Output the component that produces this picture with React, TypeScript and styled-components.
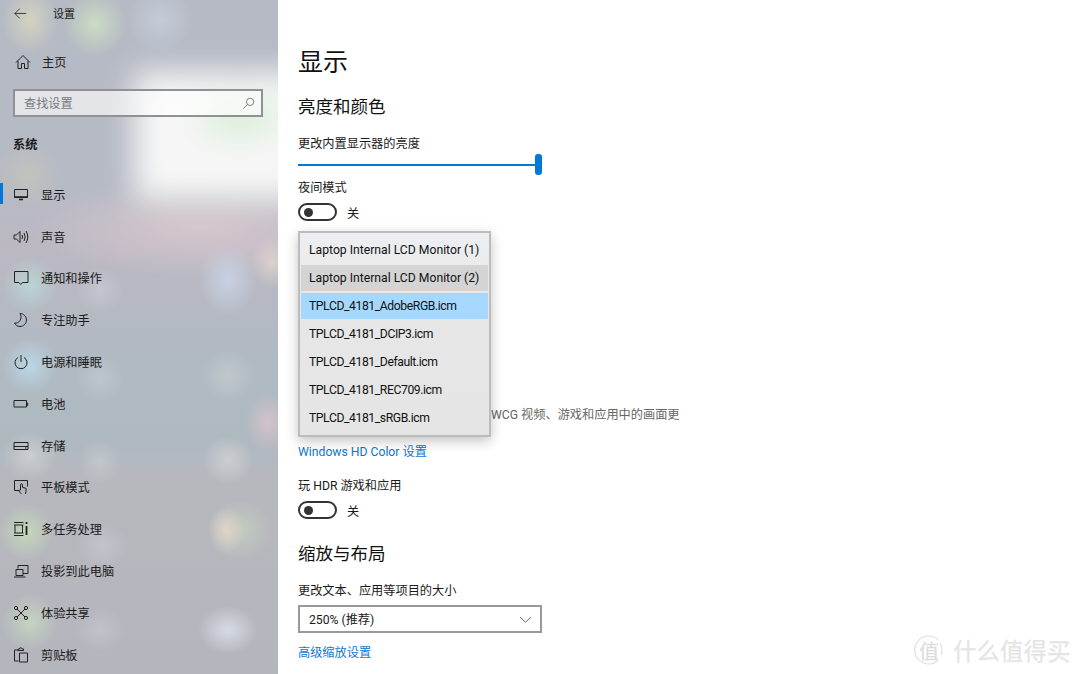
import React from "react"
import styled, { createGlobalStyle } from "styled-components"

const FONT = `Roboto, "Noto Sans CJK SC", sans-serif`

const GlobalStyle = createGlobalStyle`
  html, body {
    margin: 0;
    height: 100%;
    overflow: hidden;
    background: #fff;
    font-family: ${FONT};
    font-size: 12.2px;
    color: #1a1a1a;
  }
  * { box-sizing: border-box; }
`

const Page = styled.div`
  display: flex;
  width: 1080px;
  height: 674px;
  position: relative;
  overflow: hidden;
`

const Sidebar = styled.aside`
  width: 278px;
  flex: none;
  height: 674px;
  overflow: hidden;
  position: relative;
  isolation: isolate;
  background:
    radial-gradient(ellipse 28px 34px at 30px 20px, rgba(222, 222, 190, 0.7), transparent),
    radial-gradient(ellipse 32px 32px at 95px 24px, rgba(208, 228, 194, 0.8), transparent),
    radial-gradient(ellipse 32px 34px at 160px 20px, rgba(204, 214, 228, 0.65), transparent),
    radial-gradient(ellipse 32px 32px at 28px 175px, rgba(210, 210, 175, 0.4), transparent),
    radial-gradient(ellipse 28px 28px at 30px 285px, rgba(186, 224, 218, 0.7), transparent),
    radial-gradient(ellipse 24px 24px at 100px 290px, rgba(210, 214, 222, 0.45), transparent),
    radial-gradient(ellipse 30px 36px at 228px 280px, rgba(204, 216, 236, 0.8), transparent),
    radial-gradient(ellipse 22px 26px at 272px 262px, rgba(226, 214, 206, 0.8), transparent),
    radial-gradient(ellipse 28px 28px at 30px 366px, rgba(190, 224, 240, 0.75), transparent),
    radial-gradient(ellipse 24px 24px at 100px 378px, rgba(206, 212, 216, 0.45), transparent),
    radial-gradient(ellipse 26px 26px at 228px 376px, rgba(206, 212, 212, 0.55), transparent),
    radial-gradient(ellipse 24px 30px at 268px 422px, rgba(220, 196, 204, 0.8), transparent),
    radial-gradient(ellipse 28px 24px at 30px 456px, rgba(214, 214, 214, 0.7), transparent),
    radial-gradient(ellipse 22px 22px at 100px 462px, rgba(212, 216, 218, 0.45), transparent),
    radial-gradient(ellipse 26px 24px at 228px 460px, rgba(218, 218, 218, 0.65), transparent),
    radial-gradient(ellipse 28px 28px at 26px 532px, rgba(198, 222, 186, 0.85), transparent),
    radial-gradient(ellipse 26px 24px at 102px 546px, rgba(206, 208, 218, 0.5), transparent),
    radial-gradient(ellipse 18px 24px at 226px 530px, rgba(232, 216, 204, 0.8), transparent),
    radial-gradient(ellipse 32px 30px at 240px 530px, rgba(204, 220, 192, 0.55), transparent),
    radial-gradient(ellipse 28px 28px at 30px 622px, rgba(204, 224, 192, 0.7), transparent),
    radial-gradient(ellipse 26px 22px at 100px 630px, rgba(208, 210, 218, 0.45), transparent),
    radial-gradient(ellipse 30px 24px at 228px 630px, rgba(222, 228, 236, 0.8), transparent),
    radial-gradient(ellipse 170px 50px at 200px 228px, rgba(216, 200, 208, 0.9), transparent),
    linear-gradient(180deg, #b6bac4 0%, #b6bac4 28%, #bcb8c2 36%, #afbac2 55%, #aeb9c0 64%, #b7b8be 72%, #b4b6bd 100%);

  /* the bright window behind the acrylic */
  &::before {
    content: "";
    position: absolute;
    z-index: -1;
    left: 134px;
    top: 72px;
    width: 190px;
    height: 128px;
    background:
      radial-gradient(ellipse 56px 28px at 106px 46px, rgba(200, 234, 200, 0.95), transparent),
      #f6f6f6;
    filter: blur(15px);
  }
`

const BackBar = styled.header`
  display: flex;
  align-items: center;
  height: 26px;
  padding-left: 14px;
  gap: 26px;
  font-size: 11px;
`

const HomeRow = styled.div`
  display: flex;
  align-items: center;
  gap: 11px;
  height: 42px;
  margin-top: 15px;
  padding-left: 15px;
`

const SearchBox = styled.div`
  display: flex;
  align-items: center;
  justify-content: space-between;
  width: 250px;
  height: 28px;
  margin: 6px 0 0 13px;
  padding: 0 6px 0 9px;
  border: 2px solid #8f9194;
  background: rgba(255, 255, 255, 0.62);
  color: #77797c;
`

const SectionLabel = styled.div`
  height: 18px;
  line-height: 20px;
  margin: 18px 0 0 13px;
  font-weight: 700;
`

const NavList = styled.nav`
  display: grid;
  grid-auto-rows: 41.8px;
  margin-top: 21px;
`

const NavItem = styled.div<{ $active?: boolean }>`
  display: flex;
  align-items: center;
  gap: 12px;
  padding-left: 13px;
  position: relative;

  &::before {
    content: "";
    display: ${(p) => (p.$active ? "block" : "none")};
    position: absolute;
    left: 0;
    top: 9px;
    width: 3px;
    height: 21px;
    background: #0078d7;
  }
`

const IconBox = styled.svg`
  flex: none;
  width: 16px;
  height: 16px;
  fill: none;
  stroke: #222;
  stroke-width: 1;
`

const Main = styled.main`
  flex: 1;
  padding: 43px 0 0 20px;
  height: 674px;
  overflow: hidden;
`

const Title = styled.h1`
  margin: 0;
  height: 36px;
  line-height: 40px;
  font-size: 25px;
  font-weight: 400;
  color: #111;
`

const SectionTitle = styled.h2<{ $gap: number }>`
  margin: ${(p) => p.$gap}px 0 0;
  height: 26px;
  line-height: 28px;
  font-size: 17.5px;
  font-weight: 400;
  color: #111;
`

const FieldLabel = styled.div<{ $gap: number }>`
  margin-top: ${(p) => p.$gap}px;
  height: 18px;
  line-height: 20px;
`

const Slider = styled.div`
  position: relative;
  width: 244px;
  height: 21px;
  margin-top: 2px;

  &::before {
    content: "";
    position: absolute;
    left: 0;
    right: 6px;
    top: 10px;
    height: 2px;
    background: #0078d7;
  }
  &::after {
    content: "";
    position: absolute;
    right: 0;
    top: 0;
    width: 7px;
    height: 21px;
    border-radius: 3px;
    background: #0078d7;
  }
`

const ToggleRow = styled.div`
  display: flex;
  align-items: center;
  gap: 10px;
  height: 18px;
  margin-top: 7px;
`

const ToggleTrack = styled.span`
  display: flex;
  align-items: center;
  width: 39px;
  height: 18px;
  padding-left: 4px;
  border: 2px solid #333;
  border-radius: 9px;

  &::before {
    content: "";
    width: 9px;
    height: 9px;
    border-radius: 50%;
    background: #333;
  }
`

const ToggleText = styled.span`
  padding-top: 2px;
`

const Paragraph = styled.p`
  margin: 184px 0 0;
  padding-left: 193px;
  height: 18px;
  line-height: 20px;
  color: #666;
`

const TextLink = styled.a<{ $gap: number }>`
  display: block;
  margin-top: ${(p) => p.$gap}px;
  height: 18px;
  line-height: 20px;
  color: #0a78d2;
`

const SelectBox = styled.div`
  display: flex;
  align-items: center;
  justify-content: space-between;
  width: 244px;
  height: 28px;
  margin-top: 6px;
  padding: 0 8px 0 9px;
  border: 2px solid #999;
`

const Popup = styled.div`
  position: absolute;
  left: 298px;
  top: 231px;
  width: 193px;
  height: 206px;
  padding: 4px 1px;
  display: grid;
  grid-auto-rows: 26px;
  row-gap: 2px;
  border: 2px solid #bcbcbc;
  background: linear-gradient(180deg, #eceff2 0%, #e7e7e7 30%, #e5e5e5 100%);
  box-shadow: 0 4px 12px rgba(0, 0, 0, 0.24);
`

const PopupItem = styled.div<{ $state?: "hover" | "selected"; $file?: boolean }>`
  display: flex;
  align-items: center;
  padding-left: 8px;
  white-space: nowrap;
  color: #111;
  letter-spacing: ${(p) => (p.$file ? "-0.42px" : "0")};
  background: ${(p) =>
    p.$state === "selected" ? "#a6d8ff" : p.$state === "hover" ? "#d4d4d4" : "transparent"};
`

const Watermark = styled.div`
  position: absolute;
  left: 914px;
  top: 633px;
  display: flex;
  align-items: center;
  gap: 9px;
  color: #e4e4e4;
  text-shadow: 0 1px 1px rgba(0, 0, 0, 0.05);
`

const LogoMark = styled.span`
  position: relative;
  width: 30px;
  height: 30px;
  display: flex;
  align-items: center;
  justify-content: center;
  font-size: 20px;
  color: #dcdcdc;

  svg {
    position: absolute;
    inset: 0;
    fill: none;
    stroke: #e0e0e0;
    stroke-width: 1.2;
  }
`

const LogoText = styled.span`
  font-size: 23.5px;
  white-space: nowrap;
`

const icons: Record<string, React.ReactNode> = {
  display: (
    <>
      <path d="M1.500 2.500h13v8h-13z" />
      <path d="M1.500 10h13" strokeWidth="1.600" />
      <path d="M6 12.500h4" strokeWidth="1.600" />
    </>
  ),
  sound: (
    <>
      <path d="M1 6h2.500L7 2.500v11L3.500 10H1z" />
      <path d="M9 6q1.200 2 0 4M11 4q2.400 4 0 8M13 2q3.600 6 0 12" />
    </>
  ),
  notify: <path d="M1.500 1.500h13.500v11h-5.500l-1.700 2-1.800-2h-4.500z" />,
  moon: <path d="M7 1.500c3.500 0 6.500 3 6.500 6.500s-3 6.500-6.500 6.500c-2.500 0-4.500-1.300-5.500-3.500 4.500 1 8.500-4.500 5.500-9.500z" />,
  power: <path d="M5 3.500a6 6 0 1 0 6 0M8 1v7" />,
  battery: <path d="M1 4.500h12.500v6.500h-12.500zM13.500 7h1.200v2.500h-1.200" />,
  storage: (
    <>
      <path d="M1 4.500h14v7h-14z" />
      <path d="M1 8.500h14" />
      <path d="M12 10h1.500" />
    </>
  ),
  tablet: (
    <>
      <path d="M6 11.500h-4.500v-10h13v6" />
      <path d="M8.500 15c-1.500-1.500-2.500-2.500-2.500-3.500l1.500-.5v-5.200a1 1 0 0 1 2 0v2.700l3.500.7v3.300l-.7 2.500" />
    </>
  ),
  tasks: (
    <>
      <path d="M1 1.500h9.500M1 4h9.500M2 4v8M9.500 4v8M1 12h9.500M1 14.500h9.500" />
      <path d="M13.500 1v2M13.500 5v9" strokeWidth="1.800" />
    </>
  ),
  project: (
    <>
      <path d="M5 5.500v-3h10v8h-5" />
      <path d="M3 6.500h7v6h-7zM1 14h11.500" />
    </>
  ),
  share: (
    <>
      <path d="M4 4l8 8M12 4l-8 8" />
      <circle cx="3" cy="3" r="1.600" />
      <circle cx="13" cy="3" r="1.600" />
      <circle cx="3" cy="13" r="1.600" />
      <circle cx="13" cy="13" r="1.600" />
    </>
  ),
  clipboard: (
    <>
      <path d="M5 3h-3.500v11h4" />
      <path d="M5 3.500v-1.500h1.500a1.200 1.200 0 0 1 2.500 0h1.500v1.500z" />
      <path d="M6.500 6h8v9h-8z" />
    </>
  ),
}

const navItems = [
  { label: "显示", icon: "display", active: true },
  { label: "声音", icon: "sound" },
  { label: "通知和操作", icon: "notify" },
  { label: "专注助手", icon: "moon" },
  { label: "电源和睡眠", icon: "power" },
  { label: "电池", icon: "battery" },
  { label: "存储", icon: "storage" },
  { label: "平板模式", icon: "tablet" },
  { label: "多任务处理", icon: "tasks" },
  { label: "投影到此电脑", icon: "project" },
  { label: "体验共享", icon: "share" },
  { label: "剪贴板", icon: "clipboard" },
]

const profiles = [
  { name: "Laptop Internal LCD Monitor (1)" },
  { name: "Laptop Internal LCD Monitor (2)", state: "hover" as const },
  { name: "TPLCD_4181_AdobeRGB.icm", state: "selected" as const, file: true },
  { name: "TPLCD_4181_DCIP3.icm", file: true },
  { name: "TPLCD_4181_Default.icm", file: true },
  { name: "TPLCD_4181_REC709.icm", file: true },
  { name: "TPLCD_4181_sRGB.icm", file: true },
]

const Toggle = () => (
  <ToggleRow>
    <ToggleTrack />
    <ToggleText>关</ToggleText>
  </ToggleRow>
)

const App = () => (
  <Page>
    <GlobalStyle />
    <Sidebar>
      <BackBar>
        <IconBox viewBox="0 0 16 16" style={{ width: 13, height: 13 }}>
          <path d="M1 8h14M7 2L1 8l6 6" />
        </IconBox>
        <span>设置</span>
      </BackBar>
      <HomeRow>
        <IconBox viewBox="0 0 16 16">
          <path d="M1 8.500L8 1.500l7 7M3 6.800v7.700h3.500v-5h3v5h3.500v-7.700" />
        </IconBox>
        <span>主页</span>
      </HomeRow>
      <SearchBox>
        <span>查找设置</span>
        <IconBox viewBox="0 0 16 16" style={{ stroke: "#666", width: 13, height: 13 }}>
          <circle cx="10" cy="6" r="4.500" />
          <path d="M6.800 9.200L1.500 14.500" />
        </IconBox>
      </SearchBox>
      <SectionLabel>系统</SectionLabel>
      <NavList>
        {navItems.map((item) => (
          <NavItem key={item.label} $active={item.active}>
            <IconBox viewBox="0 0 16 16">{icons[item.icon]}</IconBox>
            <span>{item.label}</span>
          </NavItem>
        ))}
      </NavList>
    </Sidebar>
    <Main>
      <Title>显示</Title>
      <SectionTitle $gap={14}>亮度和颜色</SectionTitle>
      <FieldLabel $gap={15}>更改内置显示器的亮度</FieldLabel>
      <Slider />
      <FieldLabel $gap={3}>夜间模式</FieldLabel>
      <Toggle />
      <Paragraph>WCG 视频、游戏和应用中的画面更</Paragraph>
      <TextLink $gap={19}>Windows HD Color 设置</TextLink>
      <FieldLabel $gap={16}>玩 HDR 游戏和应用</FieldLabel>
      <Toggle />
      <SectionTitle $gap={21}>缩放与布局</SectionTitle>
      <FieldLabel $gap={15}>更改文本、应用等项目的大小</FieldLabel>
      <SelectBox>
        <span>250% (推荐)</span>
        <IconBox viewBox="0 0 16 16" style={{ stroke: "#444", width: 13, height: 13 }}>
          <path d="M1.500 5l6.500 6.500L14.500 5" />
        </IconBox>
      </SelectBox>
      <TextLink $gap={10}>高级缩放设置</TextLink>
    </Main>
    <Popup>
      {profiles.map((p) => (
        <PopupItem key={p.name} $state={p.state} $file={p.file}>
          {p.name}
        </PopupItem>
      ))}
    </Popup>
    <Watermark>
      <LogoMark>
        <svg viewBox="0 0 30 30">
          <path d="M24 4.500A14 14 0 1 0 24 25.500M26 8a14 14 0 0 1 1 12" />
        </svg>
        值
      </LogoMark>
      <LogoText>什么值得买</LogoText>
    </Watermark>
  </Page>
)

export default App
